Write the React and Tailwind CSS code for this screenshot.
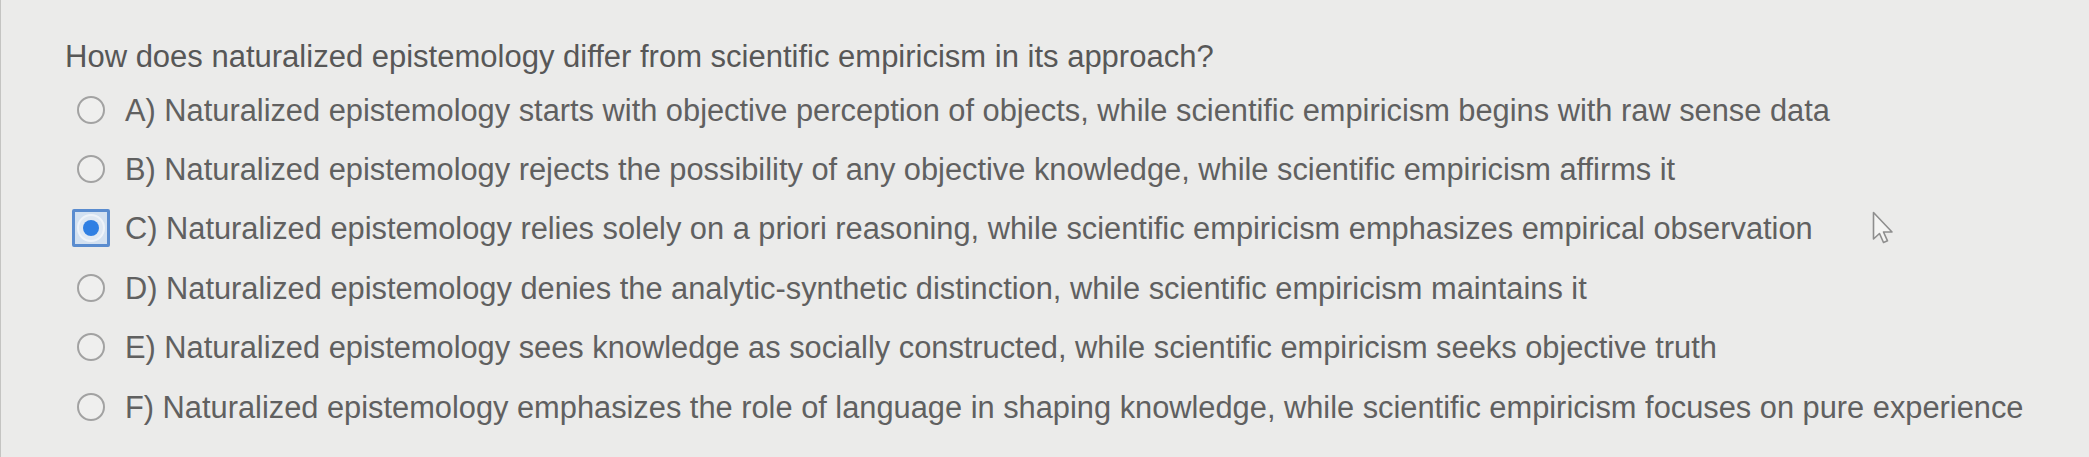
import React from "react";

const options = [
  "A) Naturalized epistemology starts with objective perception of objects, while scientific empiricism begins with raw sense data",
  "B) Naturalized epistemology rejects the possibility of any objective knowledge, while scientific empiricism affirms it",
  "C) Naturalized epistemology relies solely on a priori reasoning, while scientific empiricism emphasizes empirical observation",
  "D) Naturalized epistemology denies the analytic-synthetic distinction, while scientific empiricism maintains it",
  "E) Naturalized epistemology sees knowledge as socially constructed, while scientific empiricism seeks objective truth",
  "F) Naturalized epistemology emphasizes the role of language in shaping knowledge, while scientific empiricism focuses on pure experience",
];

function Radio({ selected }) {
  return (
    <div className="relative w-[28px] h-[28px] shrink-0">
      {selected && (
        <div className="absolute -left-[5px] -top-[5px] w-[38px] h-[38px] border-[3px] border-[#5a8ccf] bg-[#d3e1f1] rounded-[2px]" />
      )}
      <div
        className={
          "absolute inset-0 rounded-full border-[2.5px] flex items-center justify-center " +
          (selected ? "border-[#eef3f9] bg-[#dfe8f3]" : "border-[#a2a2a2] bg-[#efefee]")
        }
      >
        {selected && <div className="w-[16px] h-[16px] rounded-full bg-[#2f7fe3]" />}
      </div>
    </div>
  );
}

export default function App() {
  return (
    <div
      className="relative w-[2089px] h-[457px] bg-[#ebebea] border-l border-[#c4c4c2] overflow-hidden"
      style={{ fontFamily: '"Liberation Sans", Arial, sans-serif' }}
    >
      <div className="pl-[64px] pt-[41px]">
        <div className="text-[31px] leading-[31px] text-[#575757] whitespace-nowrap">
          How does naturalized epistemology differ from scientific empiricism in its approach?
        </div>
        <div className="mt-[8px] ml-[12px] flex flex-col">
          {options.map((o, i) => (
            <div key={i} className="flex items-center h-[59.4px] gap-[20px]">
              <Radio selected={i === 2} />
              <span className="text-[30.8px] leading-[31px] text-[#606060] whitespace-nowrap pt-[1px]">{o}</span>
            </div>
          ))}
        </div>
      </div>
      <svg
        className="absolute left-[1871px] top-[211px]"
        width="24"
        height="34"
        viewBox="0 0 24 34"
      >
        <path
          d="M1.5 1.5 L1.5 28 L7.5 22.5 L11.5 31.5 L15.5 29.8 L11.5 21 L20 21 Z"
          fill="#f4f4f3"
          stroke="#8e8e8e"
          strokeWidth="1.6"
          strokeLinejoin="round"
        />
      </svg>
    </div>
  );
}
